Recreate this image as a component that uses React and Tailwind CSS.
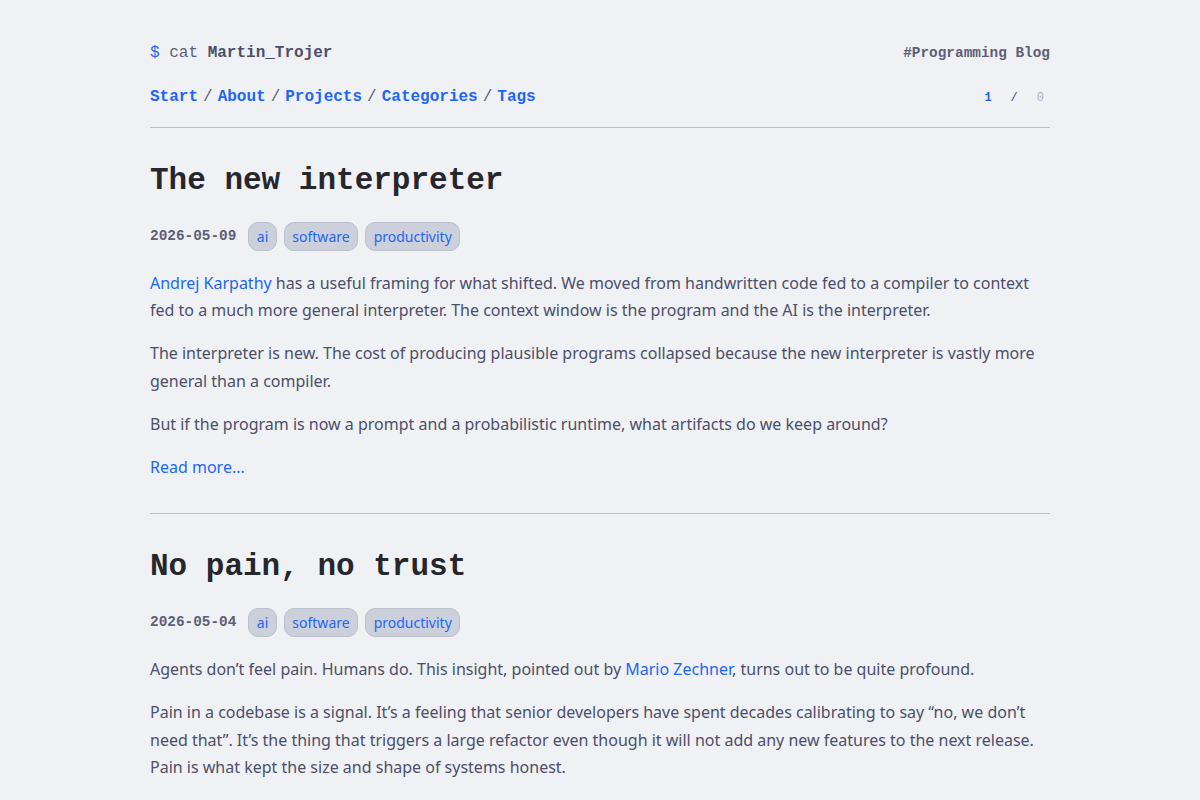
const mono = "font-['Liberation_Mono',monospace]";
const sans = "font-['Noto_Sans',sans-serif]";

const posts = [
  {
    title: "The new interpreter",
    date: "2026-05-09",
    tags: ["ai", "software", "productivity"],
    body: [
      <>
        <a className="text-[#1e66f5]">Andrej Karpathy</a> has a useful framing for what shifted. We moved from
        handwritten code fed to a compiler to context fed to a much more general interpreter. The context window is
        the program and the AI is the interpreter.
      </>,
      <>
        The interpreter is new. The cost of producing plausible programs collapsed because the new interpreter is
        vastly more general than a compiler.
      </>,
      <>But if the program is now a prompt and a probabilistic runtime, what artifacts do we keep around?</>,
    ],
    more: true,
  },
  {
    title: "No pain, no trust",
    date: "2026-05-04",
    tags: ["ai", "software", "productivity"],
    body: [
      <>
        Agents don’t feel pain. Humans do. This insight, pointed out by{" "}
        <a className="text-[#1e66f5]">Mario Zechner</a>, turns out to be quite profound.
      </>,
      <>
        Pain in a codebase is a signal. It’s a feeling that senior developers have spent decades calibrating to say
        “no, we don’t need that”. It’s the thing that triggers a large refactor even though it will not add any new
        features to the next release. Pain is what kept the size and shape of systems honest.
      </>,
      <>
        So what happens when the ones writing most of the code can’t feel it? The signal is gone, and nothing else is
        there to replace it.
      </>,
    ],
    more: true,
  },
];

function Tag({ name }) {
  return (
    <span className="h-[29px] px-[7.5px] flex items-center rounded-[10px] bg-[#ccd0da] border border-[#bcc0cc] text-[14px] text-[#1e66f5]">
      {name}
    </span>
  );
}

function Sep() {
  return <span className="mx-[5px] text-[#5c5f77] font-normal">/</span>;
}

function Post({ post }) {
  return (
    <article className="pt-[34px] pb-8 border-b border-[#bcc0cc]">
      <h2 className={`${mono} text-[31px] leading-[37px] font-bold text-[#26272d]`}>{post.title}</h2>
      <div className="mt-[23px] flex items-center gap-[7px]">
        <span className={`${mono} text-[14.4px] font-bold text-[#5c5f77] mr-[5px]`}>{post.date}</span>
        {post.tags.map((t) => (
          <Tag key={t} name={t} />
        ))}
      </div>
      <div className="mt-[19px] flex flex-col gap-4">
        {post.body.map((p, i) => (
          <p key={i}>{p}</p>
        ))}
        {post.more && <a className="text-[#1e66f5]">Read more...</a>}
      </div>
    </article>
  );
}

export default function App() {
  return (
    <div className={`min-h-screen bg-[#eff1f5] text-[#4c4f69] ${sans} text-[16px] leading-[1.7]`}>
      <div className="w-[900px] mx-auto pt-[41px]">
        <header className="pb-[18px] border-b border-[#bcc0cc]">
          <div className={`flex justify-between items-center ${mono} leading-6`}>
            <div className="text-[16px]">
              <span className="text-[#1e66f5]">$</span> <span className="text-[#5c5f77]">cat</span>{" "}
              <span className="font-bold text-[#4c4f69]">Martin_Trojer</span>
            </div>
            <div className="text-[14.4px] font-bold text-[#5c5f77]">#Programming Blog</div>
          </div>
          <div className={`mt-5 h-6 flex justify-between items-center ${mono} leading-6`}>
            <nav className="text-[16px] font-bold flex items-center">
              <a className="text-[#1e66f5]">Start</a>
              <Sep />
              <a className="text-[#1e66f5]">About</a>
              <Sep />
              <a className="text-[#1e66f5]">Projects</a>
              <Sep />
              <a className="text-[#1e66f5]">Categories</a>
              <Sep />
              <a className="text-[#1e66f5]">Tags</a>
            </nav>
            <div className="h-6 flex items-start gap-[19px] text-[12px] leading-[26px] pr-[6px]">
              <span className="font-bold text-[#1e66f5]">1</span>
              <span className="text-[#4c4f69]">/</span>
              <span className="text-[#acb0be]">0</span>
            </div>
          </div>
        </header>
        {posts.map((p) => (
          <Post key={p.title} post={p} />
        ))}
      </div>
    </div>
  );
}
